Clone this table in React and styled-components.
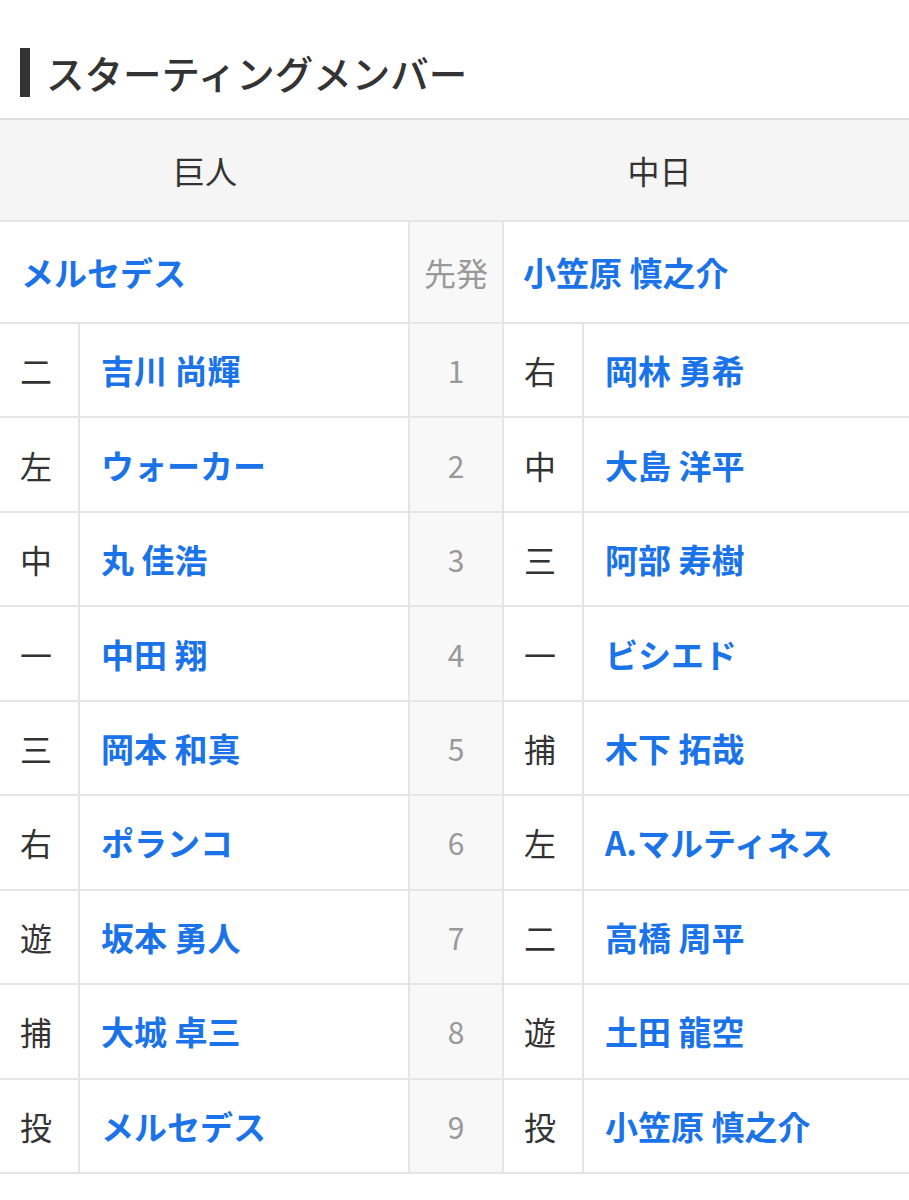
import React from 'react';
import styled, { createGlobalStyle } from 'styled-components';

const GlobalStyle = createGlobalStyle`
  body {
    margin: 0;
    background: #fff;
    font-family: "Noto Sans CJK JP", "Noto Sans", sans-serif;
    color: #333;
  }
`;

const Page = styled.div`
  width: 909px;
  overflow: hidden;
`;

const Title = styled.h2`
  display: flex;
  align-items: center;
  gap: 16px;
  margin: 0;
  padding: 48px 0 21px 20px;
  font-size: 38.5px;
  font-weight: 500;
  line-height: 49px;
  color: #333;
`;

const Bar = styled.span`
  width: 10px;
  height: 49px;
  background: #333;
`;

const Table = styled.div`
  border-top: 2px solid #ddd;
`;

const Row = styled.div`
  display: grid;
  grid-template-columns: 80px 330px 94px 80px 1fr;
  height: ${(p) => p.$height || '94.45px'};
  border-bottom: 2px solid #e5e5e5;
  box-sizing: border-box;
  background: ${(p) => (p.$head ? '#f5f5f5' : '#fff')};
`;

const Cell = styled.div`
  display: flex;
  align-items: center;
  box-sizing: border-box;
  grid-column: ${(p) => p.$span || 'auto'};
  border-right: ${(p) => (p.$last ? 'none' : '2px solid #e5e5e5')};
`;

const HeadCell = styled(Cell)`
  justify-content: center;
  border-right: none;
  font-size: 32px;
  color: #333;
`;

const PosCell = styled(Cell)`
  padding-left: 20px;
  font-size: 32px;
  color: #333;
`;

const OrderCell = styled(Cell)`
  justify-content: center;
  background: #f8f8f8;
  font-size: ${(p) => (p.$small ? '32px' : '30px')};
  color: #999;
`;

const NameCell = styled(Cell)`
  padding-left: ${(p) => p.$pad || '21px'};
`;

const NameLink = styled.a`
  font-size: 33px;
  font-weight: 700;
  color: #1a73e8;
  text-decoration: none;
  white-space: nowrap;
`;

const lineup = [
  ['二', '吉川 尚輝', '右', '岡林 勇希'],
  ['左', 'ウォーカー', '中', '大島 洋平'],
  ['中', '丸 佳浩', '三', '阿部 寿樹'],
  ['一', '中田 翔', '一', 'ビシエド'],
  ['三', '岡本 和真', '捕', '木下 拓哉'],
  ['右', 'ポランコ', '左', 'A.マルティネス'],
  ['遊', '坂本 勇人', '二', '高橋 周平'],
  ['捕', '大城 卓三', '遊', '土田 龍空'],
  ['投', 'メルセデス', '投', '小笠原 慎之介'],
];

export default function App() {
  return (
    <Page>
      <GlobalStyle />
      <Title>
        <Bar />
        スターティングメンバー
      </Title>
      <Table>
        <Row $head $height="102px">
          <HeadCell $span="1 / 3">巨人</HeadCell>
          <HeadCell $span="3 / 6">中日</HeadCell>
        </Row>
        <Row $height="102px">
          <NameCell $span="1 / 3">
            <NameLink href="#">メルセデス</NameLink>
          </NameCell>
          <OrderCell $small>先発</OrderCell>
          <NameCell $span="4 / 6" $pad="19px" $last>
            <NameLink href="#">小笠原 慎之介</NameLink>
          </NameCell>
        </Row>
        {lineup.map(([hPos, hName, cPos, cName], i) => (
          <Row key={i}>
            <PosCell>{hPos}</PosCell>
            <NameCell>
              <NameLink href="#">{hName}</NameLink>
            </NameCell>
            <OrderCell>{i + 1}</OrderCell>
            <PosCell>{cPos}</PosCell>
            <NameCell $last>
              <NameLink href="#">{cName}</NameLink>
            </NameCell>
          </Row>
        ))}
      </Table>
    </Page>
  );
}
